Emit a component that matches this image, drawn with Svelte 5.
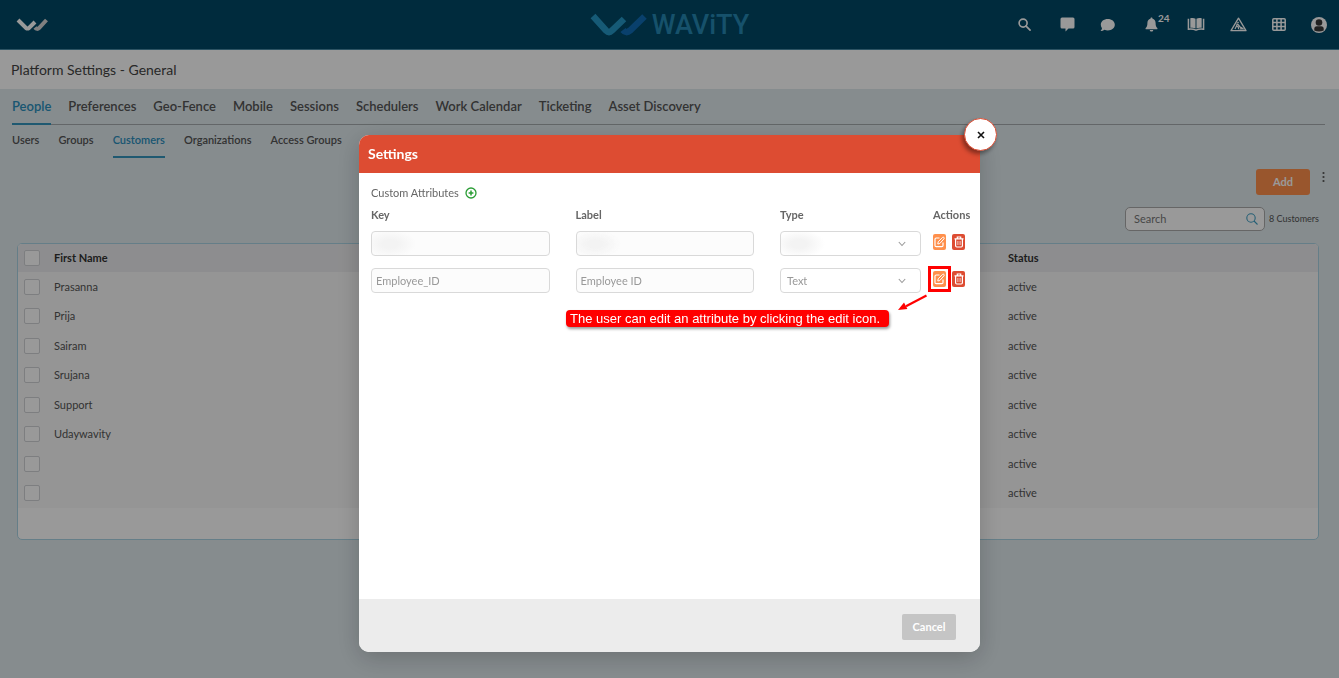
<script>
	let tabs = ['People', 'Preferences', 'Geo-Fence', 'Mobile', 'Sessions', 'Schedulers', 'Work Calendar', 'Ticketing', 'Asset Discovery']
	let subTabs = ['Users', 'Groups', 'Customers', 'Organizations', 'Access Groups']

	let activeTab = $state('People')
	let activeSubTab = $state('Customers')
	let showSettings = $state(true)
	let search = $state('')

	let customers = $state([
		{ name: 'Prasanna', status: 'active', checked: false },
		{ name: 'Prija', status: 'active', checked: false },
		{ name: 'Sairam', status: 'active', checked: false },
		{ name: 'Srujana', status: 'active', checked: false },
		{ name: 'Support', status: 'active', checked: false },
		{ name: 'Udaywavity', status: 'active', checked: false },
		{ name: '', status: 'active', checked: false },
		{ name: '', status: 'active', checked: false }
	])

	let attributes = $state([
		{ key: '', label: '', type: '', masked: true },
		{ key: 'Employee_ID', label: 'Employee ID', type: 'Text', masked: false }
	])

	function addAttribute() {
		attributes.push({ key: '', label: '', type: 'Text', masked: false })
	}

	function removeAttribute(index) {
		attributes.splice(index, 1)
	}

	function closeSettings() {
		showSettings = false
	}

	function toggleAll(event) {
		customers.forEach((c) => (c.checked = event.target.checked))
	}
</script>

<div class="page">
	<header class="topbar">
		<a class="mark" href="#home" aria-label="Home">
			<svg width="32" height="14" viewBox="0 0 32 14" fill="none" stroke-width="4">
				<path d="M2 2l8 8q1.500 1 3 0l6-6" stroke="#fff" />
				<path d="M19 9.500q2 2.500 4 .5l7.500-8" stroke="#d5d5d5" />
			</svg>
		</a>
		<div class="brand">
			<svg width="58" height="24" viewBox="0 0 58 24" fill="none" stroke-width="6.500">
				<path d="M33 17q3 4 7 .5l14.500-14" stroke="#0f6cb4" />
				<path d="M3 3l13 14.500q3 3 6 0l12-11.500" stroke="#2597c5" />
			</svg>
			<span>WAViTY</span>
		</div>
		<nav class="tools">
			<button class="wide" aria-label="Search">
				<svg width="13" height="13" viewBox="0 0 14 14" fill="none" stroke="currentColor" stroke-width="1.800">
					<circle cx="5.500" cy="5.500" r="4.300" />
					<path d="M8.700 8.700l4.300 4.300" stroke-linecap="round" />
				</svg>
			</button>
			<button aria-label="Comments">
				<svg width="15" height="15" viewBox="0 0 15 15" fill="currentColor">
					<path d="M2 .5h11a1.500 1.500 0 0 1 1.500 1.500v8a1.500 1.500 0 0 1-1.500 1.500H8.500L5.500 14.500v-3H2A1.500 1.500 0 0 1 .5 10V2A1.500 1.500 0 0 1 2 .5z" />
				</svg>
			</button>
			<button aria-label="Chat">
				<svg width="15" height="14" viewBox="0 0 15 14" fill="currentColor">
					<path d="M7.800 1c4 0 7 2.400 7 5.700s-3 5.700-7 5.700c-1.200 0-2.300-.2-3.300-.6-1 .8-2.500 1.200-4 1.200.8-.9 1.400-1.800 1.500-2.800C1.200 9.200.8 8 .8 6.700.8 3.400 3.800 1 7.800 1z" />
				</svg>
			</button>
			<button class="bell" aria-label="Notifications">
				<svg width="13" height="15" viewBox="0 0 13 15" fill="currentColor">
					<path d="M6.500.5c.6 0 1 .4 1 1v.3c2 .5 3.100 2.200 3.100 4.200 0 3 .7 4 1.700 4.900.4.500.2 1.300-.5 1.300H1.200c-.7 0-.9-.8-.5-1.300C1.700 10 2.400 9 2.400 6c0-2 1.100-3.700 3.100-4.200v-.3c0-.6.400-1 1-1zM4.800 13h3.400c0 .9-.7 1.600-1.700 1.600S4.800 13.900 4.800 13z" />
				</svg>
				<span class="count">24</span>
			</button>
			<button aria-label="Knowledge base">
				<svg width="18" height="15" viewBox="0 0 19 15" fill="currentColor">
					<path d="M3.500 1c2-.6 4-.4 5.500.4v10.200c-1.600-.8-3.500-1-5.500-.6zM15.500 1c-2-.6-4-.4-5.500.4v10.200c1.600-.8 3.500-1 5.500-.6z" />
					<path d="M1.500 1.500v11q4.500-.6 8 1 3.500-1.600 8-1v-11" fill="none" stroke="currentColor" stroke-width="1.600" />
				</svg>
			</button>
			<button aria-label="Work in progress">
				<svg width="17" height="15" viewBox="0 0 17 15" fill="none" stroke="currentColor">
					<path d="M8.500 1.200L16 13.700H1z" stroke-width="1.300" stroke-linejoin="round" />
					<path d="M7.300 6.500L6.500 9l2 1.200v2M6.500 9l-1.500 3M7.500 7l3.500 4M10.500 12l1-1.300 1.700 1.300z" stroke-width="1.200" />
					<circle cx="8" cy="5.500" r=".5" />
				</svg>
			</button>
			<button aria-label="Apps">
				<svg width="14" height="13" viewBox="0 0 14 13" fill="none" stroke="currentColor" stroke-width="1.500">
					<rect x=".8" y=".8" width="12.400" height="11.400" rx="1" />
					<path d="M1 4.600h12M1 8.400h12M4.900 1v11M9.100 1v11" />
				</svg>
			</button>
			<button aria-label="Account">
				<svg width="16" height="16" viewBox="0 0 16 16">
					<circle cx="8" cy="8" r="8" fill="#fff" />
					<circle cx="8" cy="5.500" r="3.300" fill="#373737" />
					<path d="M3.300 13.500v-1.700q0-2.600 2.600-2.600h4.200q2.600 0 2.600 2.600v1.700q-4.700 2-9.400 0z" fill="#373737" />
				</svg>
			</button>
		</nav>
	</header>

	<h1>Platform Settings - General</h1>

	<main>
		<nav class="tabs">
			{#each tabs as tab}
				<button class:active={tab === activeTab} onclick={() => (activeTab = tab)}>{tab}</button>
			{/each}
		</nav>
		<nav class="subtabs">
			{#each subTabs as tab}
				<button class:active={tab === activeSubTab} onclick={() => (activeSubTab = tab)}>{tab}</button>
			{/each}
		</nav>

		<div class="actions">
			<button class="add">Add</button>
			<button class="more" aria-label="More options" onclick={() => (showSettings = true)}>
				<svg width="4" height="12" viewBox="0 0 4 12" fill="currentColor">
					<circle cx="2.500" cy="2" r="1.100" />
					<circle cx="2.500" cy="6" r="1.100" />
					<circle cx="2.500" cy="10" r="1.100" />
				</svg>
			</button>
		</div>

		<div class="filter">
			<label class="search">
				<input type="text" placeholder="Search" aria-label="Search customers" bind:value={search} />
				<svg width="12" height="12" viewBox="0 0 12 12" fill="none" stroke="#3f9fc4" stroke-width="1.100">
					<circle cx="5" cy="5" r="4.200" />
					<path d="M8 8l3.500 3.500" />
				</svg>
			</label>
			<span>{customers.length} Customers</span>
		</div>

		<div class="grid">
			<table>
				<thead>
					<tr>
						<th class="tick"><input type="checkbox" aria-label="Select all" onchange={toggleAll} /></th>
						<th>First Name</th>
						<th class="status">Status</th>
					</tr>
				</thead>
				<tbody>
					{#each customers as customer}
						<tr>
							<td class="tick"><input type="checkbox" aria-label="Select customer" bind:checked={customer.checked} /></td>
							<td>{customer.name}</td>
							<td class="status">{customer.status}</td>
						</tr>
					{/each}
				</tbody>
			</table>
		</div>
	</main>
</div>

{#if showSettings}
	<div class="backdrop">
		<div class="modal" role="dialog" aria-modal="true" aria-labelledby="settings-title">
			<button class="close" aria-label="Close" onclick={closeSettings}>
				<svg width="8" height="8" viewBox="0 0 8 8" stroke="#111" stroke-width="1.600">
					<path d="M1 1l6 6M7 1L1 7" />
				</svg>
			</button>
			<h2 id="settings-title">Settings</h2>
			<div class="modal-body">
				<div class="section-title">
					<span>Custom Attributes</span>
					<button aria-label="Add attribute" onclick={addAttribute}>
						<svg width="12" height="12" viewBox="0 0 12 12" fill="none" stroke="#2a9d35" stroke-width="1.300">
							<circle cx="6" cy="6" r="5" />
							<path d="M6 3.600v4.800M3.600 6h4.800" stroke-width="1.500" />
						</svg>
					</button>
				</div>
				<div class="attributes">
					<div class="row head">
						<span>Key</span>
						<span>Label</span>
						<span>Type</span>
						<span>Actions</span>
					</div>
					{#each attributes as attribute, index}
						<div class="row">
							<input type="text" class:masked={attribute.masked} aria-label="Key" value={attribute.key} disabled />
							<input type="text" class:masked={attribute.masked} aria-label="Label" value={attribute.label} disabled />
							<div class="select">
								<select class:masked={attribute.masked} aria-label="Type" disabled>
									<option>{attribute.type}</option>
								</select>
								<svg width="8" height="6" viewBox="0 0 8 6" fill="none" stroke="#999" stroke-width="1.100">
									<path d="M.8 1L4 4.500 7.200 1" />
								</svg>
							</div>
							<div class="icons">
								<button class="edit" class:marked={index === 1} aria-label="Edit attribute">
									<svg width="11" height="12" viewBox="0 0 11 12" fill="none" stroke="#fff" stroke-linejoin="round">
										<path d="M5.500 2H2.200Q1 2 1 3.200v6.300q0 1.200 1.200 1.200h5.600Q9 10.700 9 9.500V6.500" stroke-width="1.200" />
										<path d="M3.800 8l.4-2.200L8.500 1.400q.7-.6 1.400 0t0 1.500L5.800 7.500z" />
									</svg>
								</button>
								<button class="delete" aria-label="Delete attribute" onclick={() => removeAttribute(index)}>
									<svg width="10" height="12" viewBox="0 0 10 12" fill="none" stroke="#fff" stroke-width="1.200">
										<path d="M.5 2.800h9M3.300 2.500V1h3.400v1.500M1.600 3v6.800q0 1.200 1.200 1.200h4.400q1.200 0 1.200-1.200V3" />
										<path d="M3.900 5v4M6.100 5v4" stroke-width=".7" />
									</svg>
								</button>
							</div>
						</div>
					{/each}
					<svg class="arrow" width="30" height="17" viewBox="0 0 30 17">
						<path d="M28.500 1.500L8 12.200" stroke="#f00" stroke-width="2.200" />
						<path d="M0 16l6-7.500 3.400 6.500z" fill="#f00" />
					</svg>
					<p class="callout">The user can edit an attribute by clicking the edit icon.</p>
				</div>
			</div>
			<footer>
				<button onclick={closeSettings}>Cancel</button>
			</footer>
		</div>
	</div>
{/if}

<style>
	:global(body) {
		background: #dfe9ed;
		font-family: Lato, "Open Sans", sans-serif;
		color: #555;
	}
	* {
		box-sizing: border-box;
	}
	button {
		font: inherit;
		color: inherit;
		background: none;
		border: 0;
		padding: 0;
		cursor: pointer;
	}
	svg {
		display: block;
	}
	.page {
		min-height: 100vh;
		font-size: 11px;
		line-height: 16px;
	}
	.topbar {
		display: grid;
		grid-template-columns: 1fr auto 1fr;
		align-items: center;
		height: 50px;
		padding: 0 12px;
		background: #004866;
		border-bottom: 1px solid #4a8aa6;
	}
	.mark {
		padding-left: 4px;
	}
	.brand {
		display: flex;
		align-items: center;
		gap: 4px;
		color: #2587b2;
		font-family: "Liberation Sans Narrow", Roboto, sans-serif;
		font-size: 27px;
		font-weight: 500;
		line-height: 32px;
	}
	.tools {
		display: flex;
		justify-content: flex-end;
		align-items: center;
		gap: 25px;
		color: #fff;
	}
	.wide {
		width: 22px;
	}
	.tools button {
		display: flex;
		justify-content: center;
	}
	.bell {
		position: relative;
		width: 22px;
	}
	.count {
		position: absolute;
		left: 18px;
		top: -5px;
		font-size: 10px;
		font-weight: 700;
		line-height: 12px;
	}
	h1 {
		margin: 0;
		padding: 10px 11px;
		background: #fff;
		color: #444;
		font-size: 14px;
		font-weight: 400;
		line-height: 19px;
	}
	main {
		padding: 0 14px 0 12px;
	}
	.tabs {
		display: flex;
		gap: 17px;
		height: 36px;
		border-bottom: 1px solid #a5abad;
		font-size: 13px;
		font-weight: 600;
	}
	.tabs button {
		height: 36px;
		border-bottom: 2px solid transparent;
	}
	.subtabs {
		display: flex;
		gap: 19px;
		height: 33px;
		font-weight: 600;
	}
	.subtabs button {
		padding-bottom: 2px;
		border-bottom: 2px solid transparent;
	}
	.tabs .active,
	.subtabs .active {
		color: #2b8fbd;
		border-color: #3495bd;
	}
	.actions {
		display: flex;
		justify-content: flex-end;
		align-items: flex-start;
		gap: 11px;
		padding-top: 11px;
	}
	.add {
		width: 54px;
		height: 26px;
		border-radius: 3px;
		background: #ff8f4b;
		color: #fff;
		font-weight: 700;
	}
	.more {
		padding-top: 2px;
	}
	.filter {
		display: flex;
		justify-content: flex-end;
		align-items: center;
		gap: 4px;
		padding: 12px 6px 12px 0;
		font-size: 9px;
	}
	.search {
		display: flex;
		align-items: center;
		width: 140px;
		height: 24px;
		padding: 0 6px 0 8px;
		border: 1px solid #aaa;
		border-radius: 5px;
		background: #fff;
	}
	.search input {
		flex: 1;
		min-width: 0;
		padding: 0;
		border: 0;
		outline: 0;
		background: none;
		font: inherit;
		font-size: 11px;
	}
	.search input::placeholder {
		color: #777;
	}
	.grid {
		margin: 0 6px 0 5px;
		padding-bottom: 31px;
		border: 1px solid #a9d3e3;
		border-radius: 5px;
		background: #fff;
		overflow: hidden;
	}
	table {
		width: 100%;
		height: 264px;
		border-collapse: collapse;
		background: #f8f8f8;
		color: #555;
	}
	th,
	td {
		padding: 0;
		text-align: left;
	}
	thead {
		height: 28px;
		background: #ececee;
		color: #333;
	}
	.tick {
		width: 36px;
		padding-left: 6px;
	}
	.tick input {
		appearance: none;
		display: block;
		width: 16px;
		height: 16px;
		margin: 0;
		border: 1px solid #d0d3d6;
		border-radius: 2px;
		background: #fff;
	}
	.status {
		width: 310px;
	}
	.backdrop {
		position: fixed;
		inset: 0;
		display: flex;
		justify-content: center;
		align-items: flex-start;
		padding-top: 135px;
		background: rgba(0, 0, 0, 0.4);
		font-size: 11px;
		line-height: 16px;
		color: #666;
	}
	.modal {
		position: relative;
		width: 90%;
		max-width: 621px;
		border-radius: 10px;
		background: #fff;
		box-shadow: 0 6px 24px rgba(0, 0, 0, 0.2);
	}
	.close {
		position: absolute;
		top: -17px;
		right: -17px;
		display: flex;
		justify-content: center;
		align-items: center;
		width: 33px;
		height: 33px;
		border: 1px solid #dd4c32;
		border-radius: 50%;
		background: #fff;
		box-shadow: -2px 3px 4px rgba(0, 0, 0, 0.4);
	}
	h2 {
		margin: 0;
		padding: 9px;
		border-radius: 10px 10px 0 0;
		background: #dd4c32;
		color: #fff;
		font-size: 14px;
		font-weight: 700;
		line-height: 20px;
	}
	.modal-body {
		min-height: 426px;
		padding: 12px;
	}
	.section-title {
		display: flex;
		align-items: center;
		gap: 6px;
	}
	.attributes {
		position: relative;
		display: grid;
		gap: 12px;
		padding-top: 6px;
	}
	.row {
		display: grid;
		grid-template-columns: 1fr 1fr 141px 21px;
		column-gap: 26px;
		align-items: center;
	}
	.row > :last-child {
		margin-left: -14px;
	}
	.head {
		font-weight: 700;
		margin-bottom: -4px;
	}
	.row input,
	.row select {
		width: 100%;
		height: 25px;
		padding: 0 4px;
		border: 1px solid #d9d9d9;
		border-radius: 4px;
		background-color: #fcfcfc;
		color: #999;
		font: inherit;
		opacity: 1;
	}
	.row select {
		appearance: none;
		display: block;
		padding: 0 6px;
		background-color: #fff;
	}
	.row .masked {
		background-image: radial-gradient(ellipse 26px 14px at 18px 12px, #f3f3f3 30%, transparent);
	}
	.select {
		position: relative;
	}
	.select svg {
		position: absolute;
		right: 15px;
		top: 10px;
		pointer-events: none;
	}
	.icons {
		display: flex;
		gap: 6px;
		padding-bottom: 3px;
	}
	.icons button {
		position: relative;
		display: flex;
		justify-content: center;
		align-items: center;
		width: 13px;
		height: 16px;
		border-radius: 2px;
	}
	.edit {
		background: #ff904c;
	}
	.delete {
		background: #dd4c32;
	}
	.marked::after {
		content: "";
		position: absolute;
		inset: -5px;
		border: 3px solid #f00;
	}
	.arrow {
		position: absolute;
		right: 40px;
		top: 93px;
	}
	.callout {
		position: absolute;
		left: 195px;
		top: 109px;
		margin: 0;
		padding: 0 9px 0 4px;
		border-radius: 4px;
		background: #f00;
		box-shadow: 1px 2px 3px rgba(0, 0, 0, 0.4);
		color: #fff;
		font-family: "Liberation Sans", Arial, sans-serif;
		font-size: 13px;
		line-height: 17px;
		white-space: nowrap;
	}
	footer {
		display: flex;
		justify-content: flex-end;
		padding: 15px 24px 12px;
		border-radius: 0 0 10px 10px;
		background: #ececec;
	}
	footer button {
		width: 54px;
		height: 26px;
		border-radius: 2px;
		background: #c5c5c5;
		color: #fff;
		font-weight: 700;
	}
</style>
